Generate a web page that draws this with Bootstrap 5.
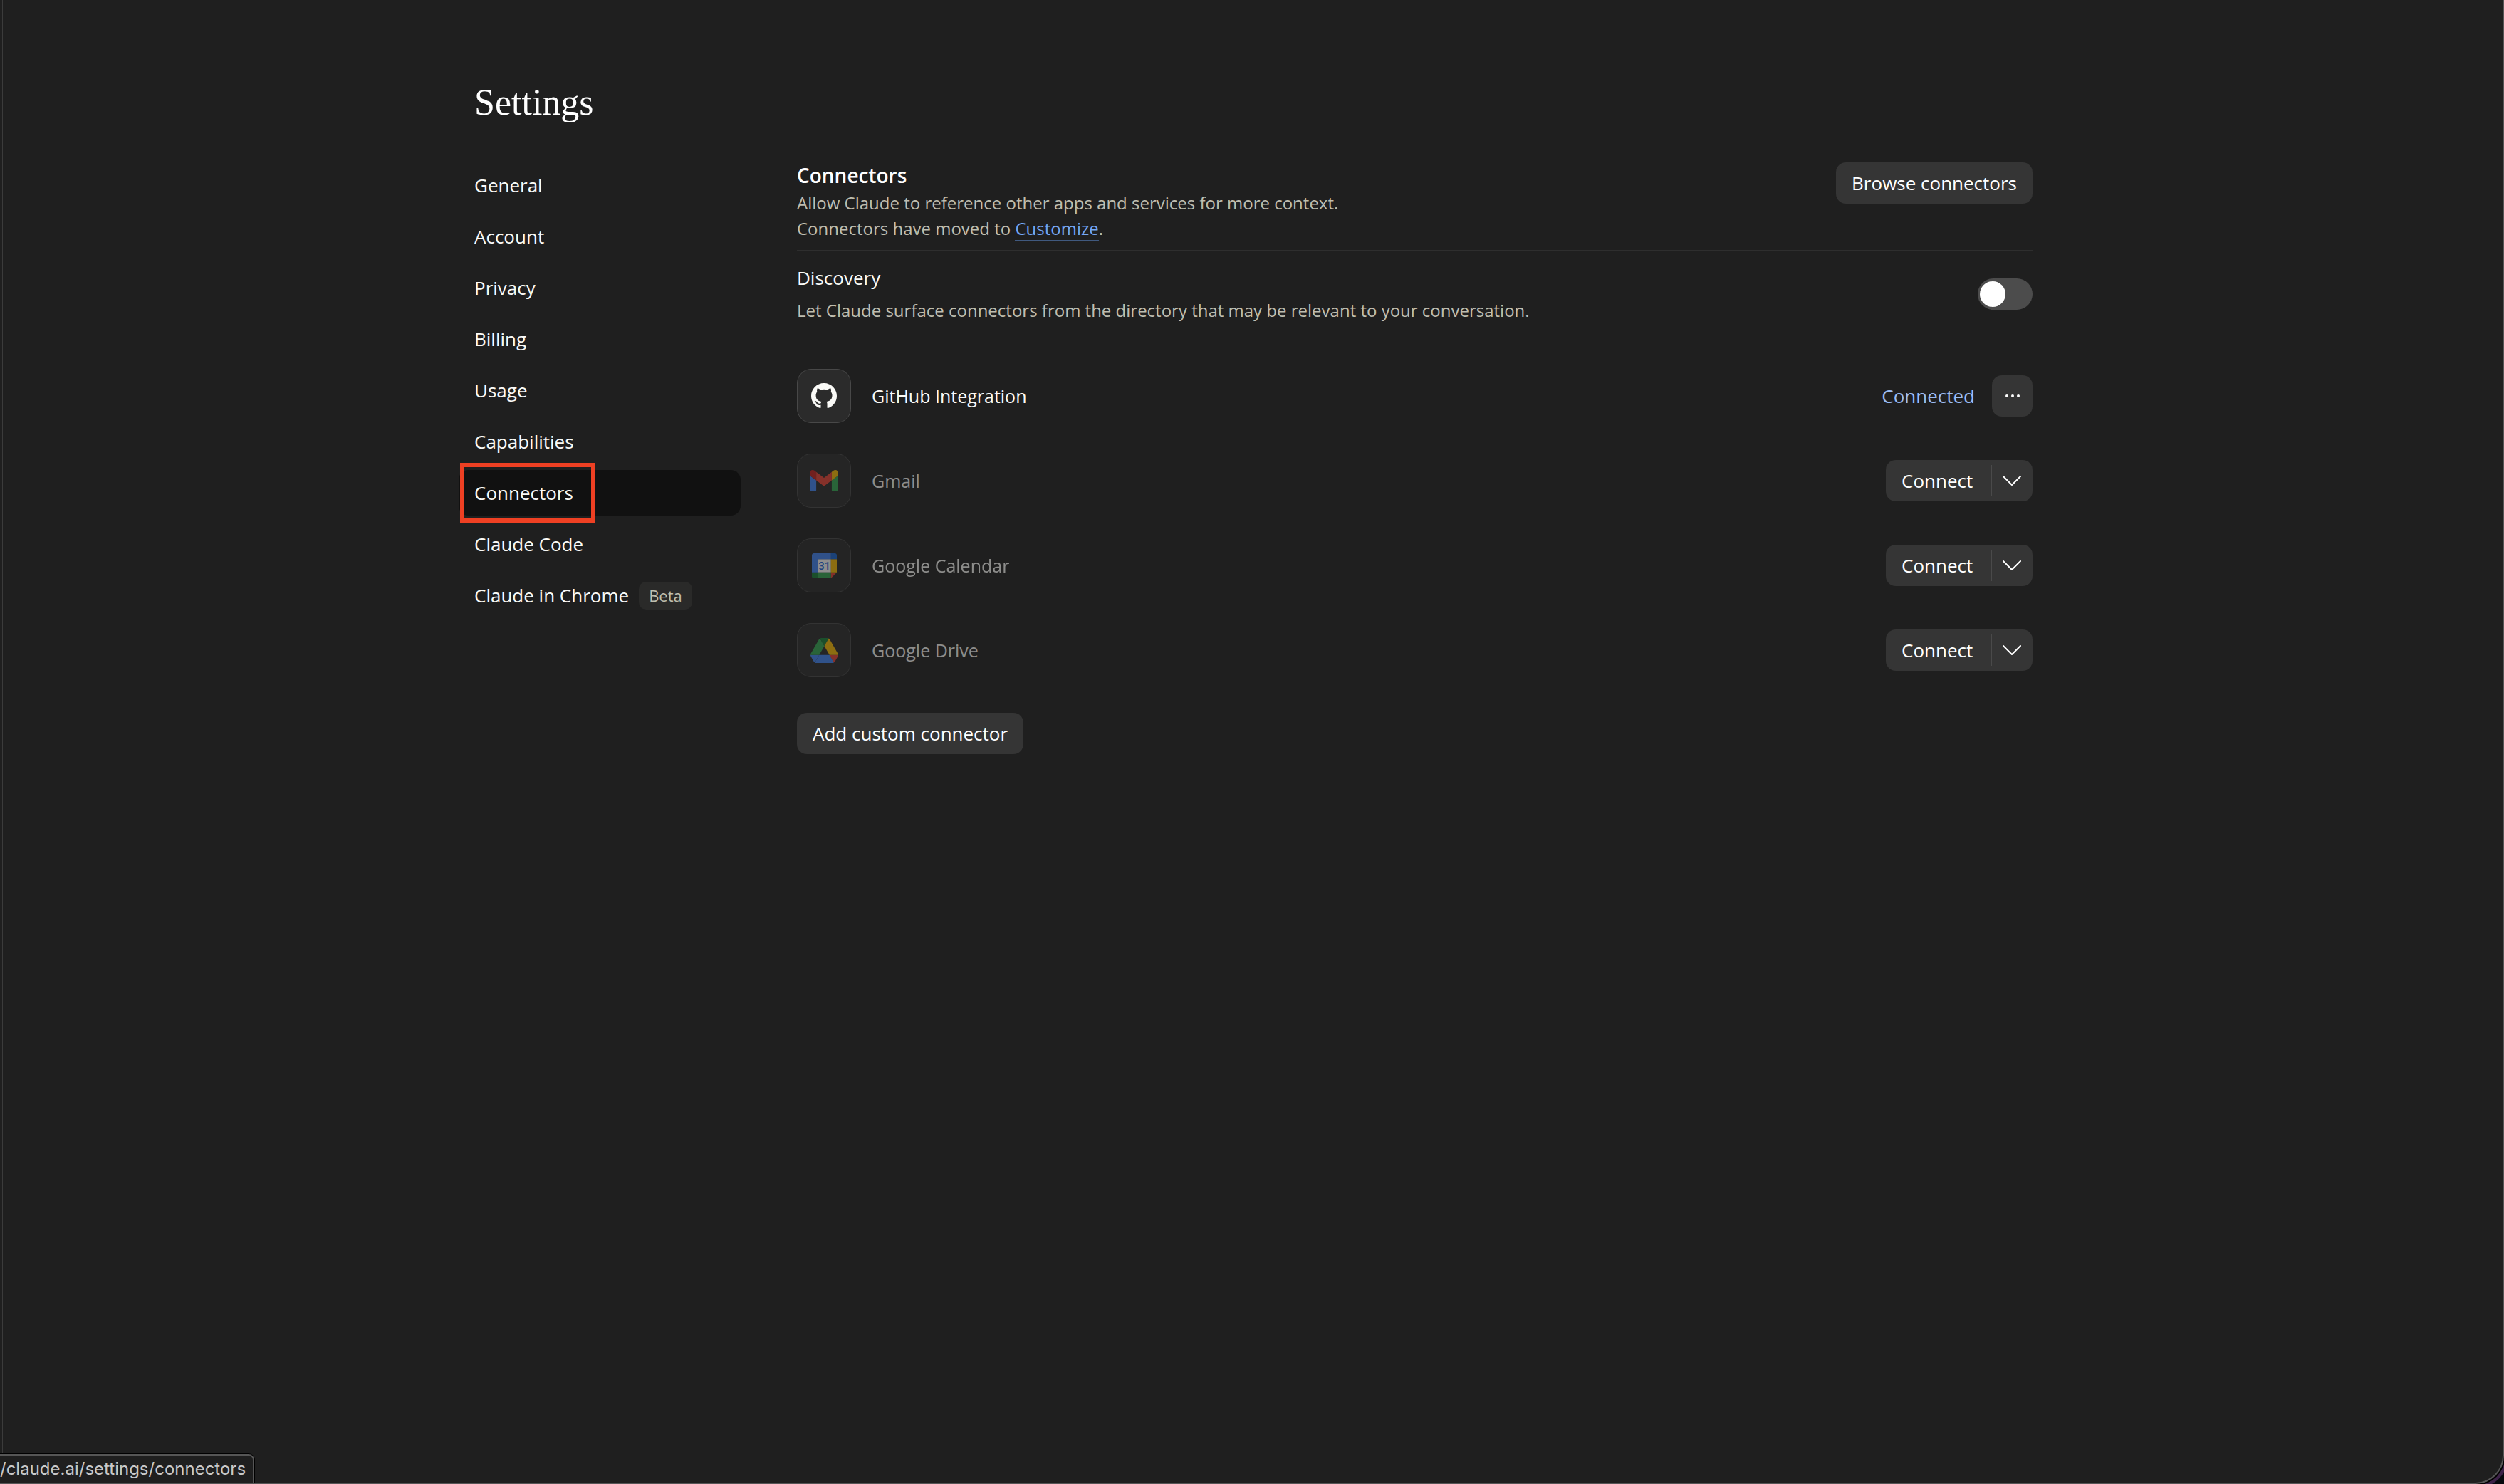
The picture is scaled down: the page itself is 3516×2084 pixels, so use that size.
<!DOCTYPE html>
<html lang="en" data-bs-theme="dark">
<head>
<meta charset="utf-8">
<meta name="viewport" content="width=device-width, initial-scale=1">
<title>Settings - Connectors</title>
<link href="https://cdn.jsdelivr.net/npm/bootstrap@5.3.0/dist/css/bootstrap.min.css" rel="stylesheet">
<style>
  body { background: #06080d; color: #fafaf7; font-family: "Open Sans", "Noto Sans", sans-serif; font-size: 26px; line-height: 36px; }
  .app-window { background: #1f1f1f; border-right: 2px solid #565656; border-bottom: 2px solid #565656; border-bottom-right-radius: 40px; padding-right: 16px; box-shadow: 0 0 0 2px #000, 3px 3px 0 2px #3d2248; }
  .app-window::before { content: ""; position: absolute; top: 0; bottom: 0; left: 3px; width: 1px; background: #3b3b3b; }
  .settings-wrap { max-width: 2210px; padding-top: 112px; }
  .page-title { font-family: "Liberation Serif", serif; font-size: 52px; line-height: 64px; font-weight: 400; padding-left: 22px; margin-bottom: 52px; }
  .settings-cols { gap: 79px; }
  .side-nav { width: 396px; gap: 8px; }
  .side-nav .nav-link { color: #fafaf7; height: 64px; padding: 0 22px; border-radius: 14px; display: flex; align-items: center; gap: 14px; position: relative; }
  .side-nav .nav-link.active { background: #111; }
  .side-nav .nav-link.active::after { content: ""; position: absolute; left: 2px; top: -10px; width: 190px; height: 84px; border: 6px solid #ee4023; }
  .tag-beta { background: #2a2a29; color: #bfbeae; font-size: 22px; line-height: 39px; padding: 0 14px; border-radius: 10px; }
  .section-title { font-size: 28px; line-height: 36px; font-weight: 600; margin-bottom: 3px; }
  .intro { padding-bottom: 12px; }
  .discovery { padding: 20px 0; }
  .discovery label { margin-bottom: 10px; }
  .muted-copy { color: #bfbeb0; font-size: 24px; line-height: 36px; }
  .muted-copy a { color: #74a7f5; text-decoration: none; border-bottom: 2px solid #40597f; }
  .split { border-bottom: 1px solid #2e2e2e; }
  .btn-soft { --bs-btn-bg: #353535; --bs-btn-color: #fff; --bs-btn-border-width: 0; --bs-btn-hover-bg: #404040; --bs-btn-hover-color: #fff; --bs-btn-font-size: 26px; --bs-btn-line-height: 36px; --bs-btn-font-weight: 500; --bs-btn-border-radius: 14px; --bs-btn-padding-x: 22px; --bs-btn-padding-y: 11px; white-space: nowrap; }
  .btn-square { --bs-btn-padding-x: 0; width: 57px; height: 58px; }
  .btn-connect { width: 148px; text-align: left; }
  .btn-caret { --bs-btn-padding-x: 0; width: 59px; }
  .btn-caret::before { content: ""; position: absolute; left: 0; top: 7px; bottom: 7px; width: 2px; background: #4a4a4a; }
  .form-switch .switch-lg { width: 77px; height: 44px; margin: 0; float: none; border: 0; background-color: #4c4c4c; background-image: url("data:image/svg+xml,%3csvg xmlns='http://www.w3.org/2000/svg' viewBox='0 0 44 44'%3e%3ccircle cx='21' cy='22' r='18' fill='%23fff'/%3e%3c/svg%3e"); }
  .conn-list { gap: 43px; padding-top: 43px; margin-bottom: 50px; }
  .conn-name { gap: 29px; font-size: 25px; }
  .linked { color: #9bbcf3; }
  .tile { width: 76px; height: 76px; border-radius: 20px; border: 1px solid #484848; background: #2b2b2b; }
  .is-off { opacity: .5; }
  .status-url { position: absolute; left: 0; bottom: 0; border: 2px solid #565656; border-left: 0; border-bottom: 0; border-top-right-radius: 8px; box-shadow: 0 0 0 1px #000; background: #1f1f1f; color: #c9c9c9; font-family: Inter, sans-serif; font-size: 24px; line-height: 38px; padding-right: 10px; }
</style>
</head>
<body>
<div class="app-window min-vh-100 position-relative">
  <div class="settings-wrap mx-auto">
    <h1 class="page-title">Settings</h1>
    <div class="settings-cols d-flex align-items-start">
      <nav class="side-nav nav flex-column flex-shrink-0" aria-label="Settings">
        <a class="nav-link" href="#">General</a>
        <a class="nav-link" href="#">Account</a>
        <a class="nav-link" href="#">Privacy</a>
        <a class="nav-link" href="#">Billing</a>
        <a class="nav-link" href="#">Usage</a>
        <a class="nav-link" href="#">Capabilities</a>
        <a class="nav-link active" aria-current="page" href="#">Connectors</a>
        <a class="nav-link" href="#">Claude Code</a>
        <a class="nav-link" href="#">Claude in Chrome <span class="tag-beta">Beta</span></a>
      </nav>
      <main class="flex-grow-1">
        <section class="intro split d-flex justify-content-between align-items-start">
          <div>
            <h2 class="section-title">Connectors</h2>
            <p class="muted-copy mb-0">Allow Claude to reference other apps and services for more context.<br>Connectors have moved to <a href="#">Customize</a>.</p>
          </div>
          <button type="button" class="btn btn-soft">Browse connectors</button>
        </section>
        <section class="discovery split d-flex justify-content-between align-items-center">
          <div>
            <label class="d-block" for="discovery">Discovery</label>
            <p class="muted-copy mb-0" id="discovery-help">Let Claude surface connectors from the directory that may be relevant to your conversation.</p>
          </div>
          <div class="form-check form-switch d-flex p-0 m-0">
            <input class="form-check-input switch-lg" type="checkbox" role="switch" id="discovery" aria-describedby="discovery-help">
          </div>
        </section>
        <ul class="conn-list list-unstyled d-flex flex-column">
          <li class="d-flex justify-content-between align-items-center">
            <div class="conn-name d-flex align-items-center">
              <span class="tile d-flex align-items-center justify-content-center">
                <svg width="36" height="36" viewBox="0 0 16 16" fill="#fafaf7" aria-hidden="true"><path d="M8 0C3.58 0 0 3.58 0 8c0 3.54 2.29 6.53 5.47 7.59.4.07.55-.17.55-.38 0-.19-.01-.82-.01-1.49-2.01.37-2.53-.49-2.69-.94-.09-.23-.48-.94-.82-1.13-.28-.15-.68-.52-.01-.53.63-.01 1.08.58 1.23.82.72 1.21 1.87.87 2.33.66.07-.52.28-.87.51-1.07-1.78-.2-3.64-.89-3.64-3.95 0-.87.31-1.59.82-2.15-.08-.2-.36-1.02.08-2.12 0 0 .67-.21 2.2.82.64-.18 1.32-.27 2-.27s1.36.09 2 .27c1.53-1.04 2.2-.82 2.2-.82.44 1.1.16 1.92.08 2.12.51.56.82 1.27.82 2.15 0 3.07-1.87 3.75-3.65 3.95.29.25.54.73.54 1.48 0 1.07-.01 1.93-.01 2.2 0 .21.15.46.55.38A8.01 8.01 0 0 0 16 8c0-4.42-3.58-8-8-8"/></svg>
              </span>
              <span>GitHub Integration</span>
            </div>
            <div class="d-flex align-items-center">
              <span class="linked me-4">Connected</span>
              <button type="button" class="btn btn-soft btn-square d-flex align-items-center justify-content-center" aria-label="More options">
                <svg width="20" height="4" viewBox="0 0 20 4" fill="#fff" aria-hidden="true"><circle cx="2" cy="2" r="2"/><circle cx="10" cy="2" r="2"/><circle cx="18" cy="2" r="2"/></svg>
              </button>
            </div>
          </li>
          <li class="d-flex justify-content-between align-items-center">
            <div class="conn-name d-flex align-items-center is-off">
              <span class="tile d-flex align-items-center justify-content-center">
                <svg width="40" height="30" viewBox="52 42 88 66" aria-hidden="true"><path fill="#4285f4" d="M58 108h14V74L52 59v43c0 3.32 2.69 6 6 6"/><path fill="#34a853" d="M120 108h14c3.32 0 6-2.69 6-6V59l-20 15"/><path fill="#fbbc04" d="M120 48v26l20-15v-8c0-7.42-8.47-11.65-14.4-7.2"/><path fill="#ea4335" d="M72 74V48l24 18 24-18v26L96 92"/><path fill="#c5221f" d="M52 51v8l20 15V48l-5.6-4.2c-5.94-4.45-14.4-.22-14.4 7.2"/></svg>
              </span>
              <span>Gmail</span>
            </div>
            <div class="btn-group">
              <button type="button" class="btn btn-soft btn-connect">Connect</button>
              <button type="button" class="btn btn-soft btn-caret d-flex align-items-center justify-content-center" aria-label="Gmail connect options">
                <svg width="26" height="14" viewBox="0 0 26 14" fill="none" stroke="#fff" stroke-width="2" stroke-linecap="round" stroke-linejoin="round" aria-hidden="true"><path d="M1 1l12 12L25 1"/></svg>
              </button>
            </div>
          </li>
          <li class="d-flex justify-content-between align-items-center">
            <div class="conn-name d-flex align-items-center is-off">
              <span class="tile d-flex align-items-center justify-content-center">
                <svg width="35" height="35" viewBox="0 0 200 200" aria-hidden="true"><path fill="#fff" d="M47 47h106v106H47z"/><path fill="#ea4335" d="M153 200l47-47h-47z"/><path fill="#fbbc04" d="M200 47h-47v106h47z"/><path fill="#34a853" d="M153 153H47v47h106z"/><path fill="#188038" d="M0 153v31c0 9 7 16 16 16h31v-47z"/><path fill="#1967d2" d="M200 47V16c0-9-7-16-16-16h-31v47z"/><path fill="#4285f4" d="M153 0H16C7 0 0 7 0 16v137h47V47h106z"/><text x="100" y="131" font-family="Roboto, sans-serif" font-size="84" font-weight="500" fill="#1a66e0" text-anchor="middle">31</text></svg>
              </span>
              <span>Google Calendar</span>
            </div>
            <div class="btn-group">
              <button type="button" class="btn btn-soft btn-connect">Connect</button>
              <button type="button" class="btn btn-soft btn-caret d-flex align-items-center justify-content-center" aria-label="Google Calendar connect options">
                <svg width="26" height="14" viewBox="0 0 26 14" fill="none" stroke="#fff" stroke-width="2" stroke-linecap="round" stroke-linejoin="round" aria-hidden="true"><path d="M1 1l12 12L25 1"/></svg>
              </button>
            </div>
          </li>
          <li class="d-flex justify-content-between align-items-center">
            <div class="conn-name d-flex align-items-center is-off">
              <span class="tile d-flex align-items-center justify-content-center">
                <svg width="39" height="35" viewBox="0 0 87.3 78" aria-hidden="true"><path fill="#4285f4" d="m6.6 66.85 3.85 6.65c.8 1.4 1.95 2.5 3.3 3.3l13.75-23.8h-27.5c0 1.55.4 3.1 1.2 4.5z"/><path fill="#34a853" d="m43.65 25-13.75-23.8c-1.35.8-2.5 1.9-3.3 3.3l-25.4 44a9.06 9.06 0 0 0 -1.2 4.5h27.5z"/><path fill="#ea4335" d="m73.55 76.8c1.35-.8 2.5-1.9 3.3-3.3l1.6-2.75 7.65-13.25c.8-1.4 1.2-2.95 1.2-4.5h-27.5l5.85 11.5z"/><path fill="#188038" d="m43.65 25 13.75-23.8c-1.35-.8-2.9-1.2-4.5-1.2h-18.5c-1.6 0-3.15.45-4.5 1.2z"/><path fill="#4285f4" d="m59.8 53h-32.3l-13.75 23.8c1.35.8 2.9 1.2 4.5 1.2h50.8c1.6 0 3.15-.45 4.5-1.2z"/><path fill="#fbbc04" d="m73.4 26.5-12.7-22c-.8-1.4-1.95-2.5-3.3-3.3l-13.75 23.8 16.15 28h27.45c0-1.55-.4-3.1-1.2-4.5z"/></svg>
              </span>
              <span>Google Drive</span>
            </div>
            <div class="btn-group">
              <button type="button" class="btn btn-soft btn-connect">Connect</button>
              <button type="button" class="btn btn-soft btn-caret d-flex align-items-center justify-content-center" aria-label="Google Drive connect options">
                <svg width="26" height="14" viewBox="0 0 26 14" fill="none" stroke="#fff" stroke-width="2" stroke-linecap="round" stroke-linejoin="round" aria-hidden="true"><path d="M1 1l12 12L25 1"/></svg>
              </button>
            </div>
          </li>
        </ul>
        <button type="button" class="btn btn-soft">Add custom connector</button>
      </main>
    </div>
  </div>
  <div class="status-url">/claude.ai/settings/connectors</div>
</div>
<script src="https://cdn.jsdelivr.net/npm/bootstrap@5.3.0/dist/js/bootstrap.bundle.min.js"></script>
</body>
</html>
